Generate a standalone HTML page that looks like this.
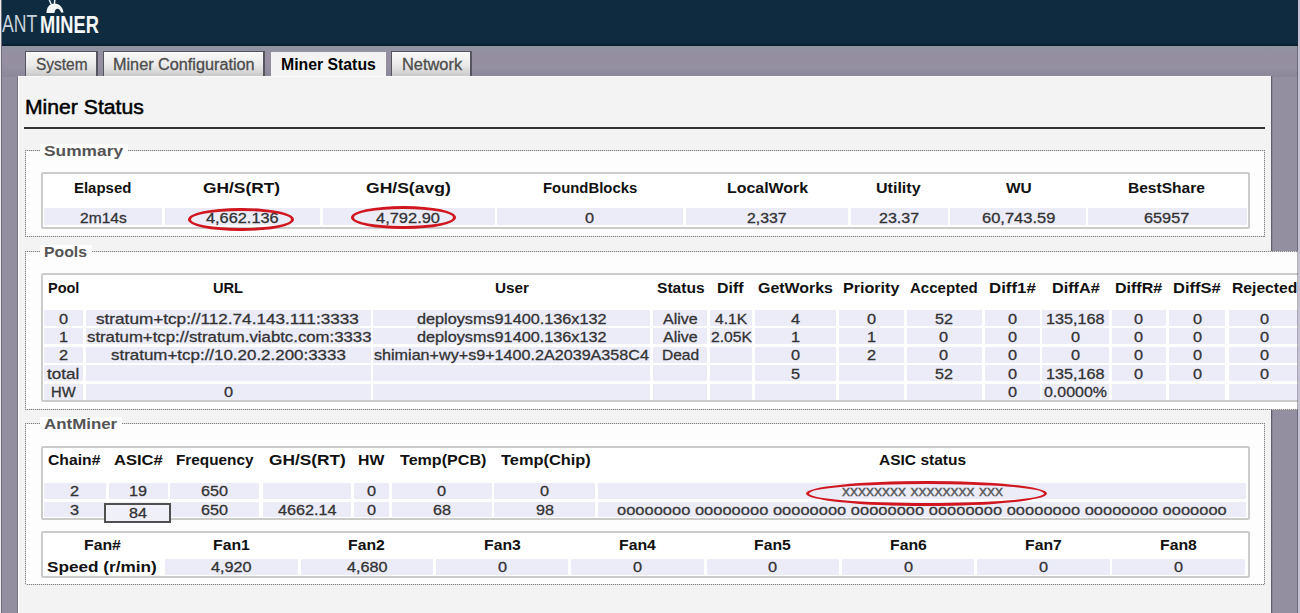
<!DOCTYPE html>
<html><head><meta charset="utf-8"><title>Miner Status</title>
<style>
html,body{margin:0;padding:0;}
body{width:1300px;height:613px;overflow:hidden;position:relative;font-family:"Liberation Sans",sans-serif;background:#938ea0;}
b{position:absolute;display:block;}
i{position:absolute;font-style:normal;white-space:pre;line-height:20px;transform-origin:0 0;}
</style></head><body>
<b style="left:0px;top:0px;width:1300px;height:613px;background:#938ea0"></b><b style="left:0px;top:46px;width:1300px;height:31px;background:linear-gradient(#9093a3,#968fa1 35%,#938ea0 70%,#8c8898)"></b><b style="left:0px;top:0px;width:1300px;height:44px;background:#0f2b3f"></b><b style="left:0px;top:44px;width:1300px;height:2px;background:#0b2030"></b><b style="left:25px;top:51px;width:73px;height:26px;background:linear-gradient(#fafafa,#e8e8e8 55%,#d2d2d2 85%,#c4c4c4);border:1px solid #55555f;border-width:1.5px 2px 0 1px;box-sizing:border-box"></b><b style="left:103px;top:51px;width:162px;height:26px;background:linear-gradient(#fafafa,#e8e8e8 55%,#d2d2d2 85%,#c4c4c4);border:1px solid #55555f;border-width:1.5px 2px 0 1px;box-sizing:border-box"></b><b style="left:271px;top:52px;width:115px;height:25px;background:#f3f3f3"></b><b style="left:391px;top:51px;width:81px;height:26px;background:linear-gradient(#fafafa,#e8e8e8 55%,#d2d2d2 85%,#c4c4c4);border:1px solid #55555f;border-width:1.5px 2px 0 1px;box-sizing:border-box"></b><b style="left:18px;top:76px;width:1253px;height:537px;background:#f3f3f3;border-left:1px solid #fff;border-top:1px solid #fafafa;box-sizing:border-box"></b><b style="left:1271px;top:76px;width:1px;height:537px;background:#625f6d"></b><b style="left:1272px;top:76px;width:1px;height:537px;background:#878395"></b><b style="left:24px;top:127px;width:1241px;height:2px;background:#333"></b><b style="left:25px;top:150px;width:1240px;height:86.5px;background:#fdfdfd"></b><b style="left:25px;top:150px;width:14.899999999999999px;height:1px;background:repeating-linear-gradient(90deg,#808080 0 1px,#dadada 1px 2px)"></b><b style="left:128px;top:150px;width:1137px;height:1px;background:repeating-linear-gradient(90deg,#808080 0 1px,#dadada 1px 2px)"></b><b style="left:25px;top:235.5px;width:1240px;height:1.0px;background:repeating-linear-gradient(90deg,#808080 0 1px,#dadada 1px 2px)"></b><b style="left:25px;top:150px;width:1px;height:86.5px;background:repeating-linear-gradient(180deg,#808080 0 1px,#dadada 1px 2px)"></b><b style="left:1264px;top:150px;width:1px;height:86.5px;background:repeating-linear-gradient(180deg,#808080 0 1px,#dadada 1px 2px)"></b><b style="left:39.9px;top:144px;width:88.1px;height:16px;background:#fdfdfd"></b><b style="left:40.5px;top:171.5px;width:1209.5px;height:57.5px;background:#fff;border:2px solid #cbcbcb;border-radius:2px;box-sizing:border-box"></b><b style="left:43.5px;top:208px;width:118.5px;height:16.5px;background:#ececf9"></b><b style="left:165px;top:208px;width:155px;height:16.5px;background:#ececf9"></b><b style="left:323px;top:208px;width:171.5px;height:16.5px;background:#ececf9"></b><b style="left:497px;top:208px;width:186px;height:16.5px;background:#ececf9"></b><b style="left:686px;top:208px;width:162px;height:16.5px;background:#ececf9"></b><b style="left:851px;top:208px;width:97px;height:16.5px;background:#ececf9"></b><b style="left:950px;top:208px;width:136px;height:16.5px;background:#ececf9"></b><b style="left:1088px;top:208px;width:159px;height:16.5px;background:#ececf9"></b><b style="left:25px;top:251px;width:1305px;height:159px;background:#fdfdfd"></b><b style="left:25px;top:251px;width:15px;height:1px;background:repeating-linear-gradient(90deg,#808080 0 1px,#dadada 1px 2px)"></b><b style="left:92px;top:251px;width:1238px;height:1px;background:repeating-linear-gradient(90deg,#808080 0 1px,#dadada 1px 2px)"></b><b style="left:25px;top:409px;width:1305px;height:1px;background:repeating-linear-gradient(90deg,#808080 0 1px,#dadada 1px 2px)"></b><b style="left:25px;top:251px;width:1px;height:159px;background:repeating-linear-gradient(180deg,#808080 0 1px,#dadada 1px 2px)"></b><b style="left:40px;top:245px;width:52px;height:16px;background:#fdfdfd"></b><b style="left:40.5px;top:272.5px;width:1299.5px;height:129.5px;background:#fff;border:2px solid #cbcbcb;border-radius:2px;box-sizing:border-box"></b><b style="left:43.5px;top:310px;width:39.5px;height:16px;background:#ececf9"></b><b style="left:86px;top:310px;width:284.6px;height:16px;background:#ececf9"></b><b style="left:373px;top:310px;width:277.29999999999995px;height:16px;background:#ececf9"></b><b style="left:653px;top:310px;width:54.299999999999955px;height:16px;background:#ececf9"></b><b style="left:710.3px;top:310px;width:41.90000000000009px;height:16px;background:#ececf9"></b><b style="left:754.7px;top:310px;width:81.29999999999995px;height:16px;background:#ececf9"></b><b style="left:839.2px;top:310px;width:64.79999999999995px;height:16px;background:#ececf9"></b><b style="left:906.5px;top:310px;width:75.0px;height:16px;background:#ececf9"></b><b style="left:984.6px;top:310px;width:55.39999999999998px;height:16px;background:#ececf9"></b><b style="left:1042px;top:310px;width:66.59999999999991px;height:16px;background:#ececf9"></b><b style="left:1111.7px;top:310px;width:54.299999999999955px;height:16px;background:#ececf9"></b><b style="left:1169.2px;top:310px;width:56.299999999999955px;height:16px;background:#ececf9"></b><b style="left:1228.6px;top:310px;width:71.90000000000009px;height:16px;background:#ececf9"></b><b style="left:43.5px;top:328px;width:39.5px;height:16px;background:#ececf9"></b><b style="left:86px;top:328px;width:284.6px;height:16px;background:#ececf9"></b><b style="left:373px;top:328px;width:277.29999999999995px;height:16px;background:#ececf9"></b><b style="left:653px;top:328px;width:54.299999999999955px;height:16px;background:#ececf9"></b><b style="left:710.3px;top:328px;width:41.90000000000009px;height:16px;background:#ececf9"></b><b style="left:754.7px;top:328px;width:81.29999999999995px;height:16px;background:#ececf9"></b><b style="left:839.2px;top:328px;width:64.79999999999995px;height:16px;background:#ececf9"></b><b style="left:906.5px;top:328px;width:75.0px;height:16px;background:#ececf9"></b><b style="left:984.6px;top:328px;width:55.39999999999998px;height:16px;background:#ececf9"></b><b style="left:1042px;top:328px;width:66.59999999999991px;height:16px;background:#ececf9"></b><b style="left:1111.7px;top:328px;width:54.299999999999955px;height:16px;background:#ececf9"></b><b style="left:1169.2px;top:328px;width:56.299999999999955px;height:16px;background:#ececf9"></b><b style="left:1228.6px;top:328px;width:71.90000000000009px;height:16px;background:#ececf9"></b><b style="left:43.5px;top:346.5px;width:39.5px;height:16.0px;background:#ececf9"></b><b style="left:86px;top:346.5px;width:284.6px;height:16.0px;background:#ececf9"></b><b style="left:373px;top:346.5px;width:277.29999999999995px;height:16.0px;background:#ececf9"></b><b style="left:653px;top:346.5px;width:54.299999999999955px;height:16.0px;background:#ececf9"></b><b style="left:710.3px;top:346.5px;width:41.90000000000009px;height:16.0px;background:#ececf9"></b><b style="left:754.7px;top:346.5px;width:81.29999999999995px;height:16.0px;background:#ececf9"></b><b style="left:839.2px;top:346.5px;width:64.79999999999995px;height:16.0px;background:#ececf9"></b><b style="left:906.5px;top:346.5px;width:75.0px;height:16.0px;background:#ececf9"></b><b style="left:984.6px;top:346.5px;width:55.39999999999998px;height:16.0px;background:#ececf9"></b><b style="left:1042px;top:346.5px;width:66.59999999999991px;height:16.0px;background:#ececf9"></b><b style="left:1111.7px;top:346.5px;width:54.299999999999955px;height:16.0px;background:#ececf9"></b><b style="left:1169.2px;top:346.5px;width:56.299999999999955px;height:16.0px;background:#ececf9"></b><b style="left:1228.6px;top:346.5px;width:71.90000000000009px;height:16.0px;background:#ececf9"></b><b style="left:43.5px;top:365px;width:39.5px;height:16px;background:#ececf9"></b><b style="left:86px;top:365px;width:284.6px;height:16px;background:#ececf9"></b><b style="left:373px;top:365px;width:277.29999999999995px;height:16px;background:#ececf9"></b><b style="left:653px;top:365px;width:54.299999999999955px;height:16px;background:#ececf9"></b><b style="left:710.3px;top:365px;width:41.90000000000009px;height:16px;background:#ececf9"></b><b style="left:754.7px;top:365px;width:81.29999999999995px;height:16px;background:#ececf9"></b><b style="left:839.2px;top:365px;width:64.79999999999995px;height:16px;background:#ececf9"></b><b style="left:906.5px;top:365px;width:75.0px;height:16px;background:#ececf9"></b><b style="left:984.6px;top:365px;width:55.39999999999998px;height:16px;background:#ececf9"></b><b style="left:1042px;top:365px;width:66.59999999999991px;height:16px;background:#ececf9"></b><b style="left:1111.7px;top:365px;width:54.299999999999955px;height:16px;background:#ececf9"></b><b style="left:1169.2px;top:365px;width:56.299999999999955px;height:16px;background:#ececf9"></b><b style="left:1228.6px;top:365px;width:71.90000000000009px;height:16px;background:#ececf9"></b><b style="left:43.5px;top:383.5px;width:39.5px;height:16.0px;background:#ececf9"></b><b style="left:86px;top:383.5px;width:284.6px;height:16.0px;background:#ececf9"></b><b style="left:373px;top:383.5px;width:277.29999999999995px;height:16.0px;background:#ececf9"></b><b style="left:653px;top:383.5px;width:54.299999999999955px;height:16.0px;background:#ececf9"></b><b style="left:710.3px;top:383.5px;width:41.90000000000009px;height:16.0px;background:#ececf9"></b><b style="left:754.7px;top:383.5px;width:81.29999999999995px;height:16.0px;background:#ececf9"></b><b style="left:839.2px;top:383.5px;width:64.79999999999995px;height:16.0px;background:#ececf9"></b><b style="left:906.5px;top:383.5px;width:75.0px;height:16.0px;background:#ececf9"></b><b style="left:984.6px;top:383.5px;width:55.39999999999998px;height:16.0px;background:#ececf9"></b><b style="left:1042px;top:383.5px;width:66.59999999999991px;height:16.0px;background:#ececf9"></b><b style="left:1111.7px;top:383.5px;width:54.299999999999955px;height:16.0px;background:#ececf9"></b><b style="left:1169.2px;top:383.5px;width:56.299999999999955px;height:16.0px;background:#ececf9"></b><b style="left:1228.6px;top:383.5px;width:71.90000000000009px;height:16.0px;background:#ececf9"></b><b style="left:25px;top:423px;width:1240px;height:162px;background:#fdfdfd"></b><b style="left:25px;top:423px;width:15px;height:1px;background:repeating-linear-gradient(90deg,#808080 0 1px,#dadada 1px 2px)"></b><b style="left:122.2px;top:423px;width:1142.8px;height:1px;background:repeating-linear-gradient(90deg,#808080 0 1px,#dadada 1px 2px)"></b><b style="left:25px;top:584px;width:1240px;height:1px;background:repeating-linear-gradient(90deg,#808080 0 1px,#dadada 1px 2px)"></b><b style="left:25px;top:423px;width:1px;height:162px;background:repeating-linear-gradient(180deg,#808080 0 1px,#dadada 1px 2px)"></b><b style="left:1264px;top:423px;width:1px;height:162px;background:repeating-linear-gradient(180deg,#808080 0 1px,#dadada 1px 2px)"></b><b style="left:40px;top:417px;width:82.2px;height:16px;background:#fdfdfd"></b><b style="left:40.5px;top:446px;width:1209.5px;height:74px;background:#fff;border:2px solid #cbcbcb;border-radius:2px;box-sizing:border-box"></b><b style="left:43.5px;top:483px;width:62.2px;height:15.5px;background:#ececf9"></b><b style="left:109px;top:483px;width:58.69999999999999px;height:15.5px;background:#ececf9"></b><b style="left:170.2px;top:483px;width:88.60000000000002px;height:15.5px;background:#ececf9"></b><b style="left:262.8px;top:483px;width:88.19999999999999px;height:15.5px;background:#ececf9"></b><b style="left:354px;top:483px;width:35px;height:15.5px;background:#ececf9"></b><b style="left:392px;top:483px;width:99.60000000000002px;height:15.5px;background:#ececf9"></b><b style="left:494.4px;top:483px;width:100.89999999999998px;height:15.5px;background:#ececf9"></b><b style="left:598px;top:483px;width:648px;height:15.5px;background:#ececf9"></b><b style="left:43.5px;top:501.5px;width:62.2px;height:15.5px;background:#ececf9"></b><b style="left:109px;top:501.5px;width:58.69999999999999px;height:15.5px;background:#ececf9"></b><b style="left:170.2px;top:501.5px;width:88.60000000000002px;height:15.5px;background:#ececf9"></b><b style="left:262.8px;top:501.5px;width:88.19999999999999px;height:15.5px;background:#ececf9"></b><b style="left:354px;top:501.5px;width:35px;height:15.5px;background:#ececf9"></b><b style="left:392px;top:501.5px;width:99.60000000000002px;height:15.5px;background:#ececf9"></b><b style="left:494.4px;top:501.5px;width:100.89999999999998px;height:15.5px;background:#ececf9"></b><b style="left:598px;top:501.5px;width:648px;height:15.5px;background:#ececf9"></b><b style="left:104px;top:503px;width:67px;height:20px;border:2px solid #505050;box-sizing:border-box;background:#f0f0f9"></b><b style="left:40.5px;top:530.5px;width:1209.5px;height:47.5px;background:#fff;border:2px solid #cbcbcb;border-radius:2px;box-sizing:border-box"></b><b style="left:165.3px;top:558.5px;width:132.5px;height:16.0px;background:#ececf9"></b><b style="left:300.6px;top:558.5px;width:132.5px;height:16.0px;background:#ececf9"></b><b style="left:435.90000000000003px;top:558.5px;width:132.50000000000006px;height:16.0px;background:#ececf9"></b><b style="left:571.2px;top:558.5px;width:132.5px;height:16.0px;background:#ececf9"></b><b style="left:706.5px;top:558.5px;width:132.5px;height:16.0px;background:#ececf9"></b><b style="left:841.8px;top:558.5px;width:132.5px;height:16.0px;background:#ececf9"></b><b style="left:977.1000000000001px;top:558.5px;width:132.5px;height:16.0px;background:#ececf9"></b><b style="left:1112.4px;top:558.5px;width:132.5px;height:16.0px;background:#ececf9"></b><b style="left:0px;top:0px;width:1px;height:613px;background:#ececf0"></b><b style="left:1px;top:0px;width:1px;height:613px;background:#6f6d79"></b><b style="left:17px;top:77px;width:1px;height:536px;background:#77748a"></b><b style="left:1297px;top:0px;width:1px;height:613px;background:rgba(40,40,60,0.35)"></b><b style="left:1298px;top:0px;width:2px;height:613px;background:#c4c2d2"></b>
<svg style="position:absolute;left:38px;top:0" width="30" height="16" viewBox="0 0 30 16">
<path d="M8.5 13 C8.5 7.5 11.5 3.5 16.5 3.5 C21.5 3.5 25 7.5 25.5 12.5 L23 12.5 C22.5 10.2 21 8.8 19.5 8.8 C18 8.8 16.8 10 16.5 13 Z" fill="#f4f6f8"/>
<path d="M11.3 0 L13.3 4.5 M16.8 0 L16.4 4" stroke="#e8ecf0" stroke-width="1.5" fill="none"/>
</svg>
<i style="left:35.90px;top:55.00px;font-size:16px;font-weight:400;color:#4c4c4c;transform:scaleX(0.9662);-webkit-text-stroke:0.3px #4c4c4c;">System</i><i style="left:113.20px;top:55.00px;font-size:16px;font-weight:400;color:#4c4c4c;transform:scaleX(1.0143);-webkit-text-stroke:0.3px #4c4c4c;">Miner Configuration</i><i style="left:280.60px;top:55.00px;font-size:16px;font-weight:700;color:#000;transform:scaleX(0.9875);">Miner Status</i><i style="left:401.50px;top:55.00px;font-size:16px;font-weight:400;color:#4c4c4c;transform:scaleX(1.0238);-webkit-text-stroke:0.3px #4c4c4c;">Network</i><i style="left:24.80px;top:97.00px;font-size:20px;font-weight:400;color:#000;transform:scaleX(1.0579);-webkit-text-stroke:0.5px #000;">Miner Status</i><i style="left:43.90px;top:141.00px;font-size:15px;font-weight:700;color:#545454;transform:scaleX(1.1564);">Summary</i><i style="left:73.80px;top:177.60px;font-size:15px;font-weight:700;color:#111;transform:scaleX(0.9965);">Elapsed</i><i style="left:79.80px;top:207.60px;font-size:15px;font-weight:400;color:#333;transform:scaleX(1.0378);-webkit-text-stroke:0.3px #333;">2m14s</i><i style="left:203.40px;top:177.60px;font-size:15px;font-weight:700;color:#111;transform:scaleX(1.1574);">GH/S(RT)</i><i style="left:205.90px;top:207.60px;font-size:15px;font-weight:400;color:#333;transform:scaleX(1.0885);-webkit-text-stroke:0.3px #333;">4,662.136</i><i style="left:366.00px;top:177.60px;font-size:15px;font-weight:700;color:#111;transform:scaleX(1.1683);">GH/S(avg)</i><i style="left:375.80px;top:207.60px;font-size:15px;font-weight:400;color:#333;transform:scaleX(1.0959);-webkit-text-stroke:0.3px #333;">4,792.90</i><i style="left:543.20px;top:177.60px;font-size:15px;font-weight:700;color:#111;transform:scaleX(0.9916);">FoundBlocks</i><i style="left:585.48px;top:207.60px;font-size:15px;font-weight:400;color:#333;transform:scaleX(1.0880);-webkit-text-stroke:0.3px #333;">0</i><i style="left:726.80px;top:177.60px;font-size:15px;font-weight:700;color:#111;transform:scaleX(1.0614);">LocalWork</i><i style="left:747.00px;top:207.60px;font-size:15px;font-weight:400;color:#333;transform:scaleX(1.0507);-webkit-text-stroke:0.3px #333;">2,337</i><i style="left:876.40px;top:177.60px;font-size:15px;font-weight:700;color:#111;transform:scaleX(1.0695);">Utility</i><i style="left:879.00px;top:207.60px;font-size:15px;font-weight:400;color:#333;transform:scaleX(1.0667);-webkit-text-stroke:0.3px #333;">23.37</i><i style="left:1006.00px;top:177.60px;font-size:15px;font-weight:700;color:#111;transform:scaleX(1.0280);">WU</i><i style="left:981.50px;top:207.60px;font-size:15px;font-weight:400;color:#333;transform:scaleX(1.0990);-webkit-text-stroke:0.3px #333;">60,743.59</i><i style="left:1128.30px;top:177.60px;font-size:15px;font-weight:700;color:#111;transform:scaleX(1.0364);">BestShare</i><i style="left:1144.00px;top:207.60px;font-size:15px;font-weight:400;color:#333;transform:scaleX(1.0839);-webkit-text-stroke:0.3px #333;">65957</i><i style="left:44.00px;top:242.00px;font-size:15px;font-weight:700;color:#545454;transform:scaleX(1.0539);">Pools</i><i style="left:47.60px;top:277.60px;font-size:15px;font-weight:700;color:#111;transform:scaleX(0.9662);">Pool</i><i style="left:213.00px;top:277.60px;font-size:15px;font-weight:700;color:#111;transform:scaleX(0.9740);">URL</i><i style="left:495.00px;top:277.60px;font-size:15px;font-weight:700;color:#111;transform:scaleX(1.0180);">User</i><i style="left:656.50px;top:277.60px;font-size:15px;font-weight:700;color:#111;transform:scaleX(1.0371);">Status</i><i style="left:717.40px;top:277.60px;font-size:15px;font-weight:700;color:#111;transform:scaleX(1.0598);">Diff</i><i style="left:758.00px;top:277.60px;font-size:15px;font-weight:700;color:#111;transform:scaleX(1.0623);">GetWorks</i><i style="left:843.00px;top:277.60px;font-size:15px;font-weight:700;color:#111;transform:scaleX(1.0743);">Priority</i><i style="left:909.80px;top:277.60px;font-size:15px;font-weight:700;color:#111;transform:scaleX(1.0030);">Accepted</i><i style="left:988.60px;top:277.60px;font-size:15px;font-weight:700;color:#111;transform:scaleX(1.1223);">Diff1#</i><i style="left:1051.70px;top:277.60px;font-size:15px;font-weight:700;color:#111;transform:scaleX(1.0792);">DiffA#</i><i style="left:1114.80px;top:277.60px;font-size:15px;font-weight:700;color:#111;transform:scaleX(1.0679);">DiffR#</i><i style="left:1173.00px;top:277.60px;font-size:15px;font-weight:700;color:#111;transform:scaleX(1.0993);">DiffS#</i><i style="left:1231.70px;top:277.60px;font-size:15px;font-weight:700;color:#111;transform:scaleX(1.0448);">Rejected</i><i style="left:58.73px;top:308.80px;font-size:15px;font-weight:400;color:#333;transform:scaleX(1.0880);-webkit-text-stroke:0.3px #333;">0</i><i style="left:96.20px;top:308.80px;font-size:15px;font-weight:400;color:#333;transform:scaleX(1.1441);-webkit-text-stroke:0.3px #333;">stratum+tcp://112.74.143.111:3333</i><i style="left:416.50px;top:308.80px;font-size:15px;font-weight:400;color:#333;transform:scaleX(1.0822);-webkit-text-stroke:0.3px #333;">deploysms91400.136x132</i><i style="left:662.85px;top:308.80px;font-size:15px;font-weight:400;color:#333;transform:scaleX(1.0646);-webkit-text-stroke:0.3px #333;">Alive</i><i style="left:715.20px;top:308.80px;font-size:15px;font-weight:400;color:#333;transform:scaleX(1.0387);-webkit-text-stroke:0.3px #333;">4.1K</i><i style="left:790.83px;top:308.80px;font-size:15px;font-weight:400;color:#333;transform:scaleX(1.0880);-webkit-text-stroke:0.3px #333;">4</i><i style="left:867.08px;top:308.80px;font-size:15px;font-weight:400;color:#333;transform:scaleX(1.0880);-webkit-text-stroke:0.3px #333;">0</i><i style="left:935.02px;top:308.80px;font-size:15px;font-weight:400;color:#333;transform:scaleX(1.0750);-webkit-text-stroke:0.3px #333;">52</i><i style="left:1007.78px;top:308.80px;font-size:15px;font-weight:400;color:#333;transform:scaleX(1.0880);-webkit-text-stroke:0.3px #333;">0</i><i style="left:1046.03px;top:308.80px;font-size:15px;font-weight:400;color:#333;transform:scaleX(1.0800);-webkit-text-stroke:0.3px #333;">135,168</i><i style="left:1134.33px;top:308.80px;font-size:15px;font-weight:400;color:#333;transform:scaleX(1.0880);-webkit-text-stroke:0.3px #333;">0</i><i style="left:1192.83px;top:308.80px;font-size:15px;font-weight:400;color:#333;transform:scaleX(1.0880);-webkit-text-stroke:0.3px #333;">0</i><i style="left:1260.03px;top:308.80px;font-size:15px;font-weight:400;color:#333;transform:scaleX(1.0880);-webkit-text-stroke:0.3px #333;">0</i><i style="left:58.73px;top:326.80px;font-size:15px;font-weight:400;color:#333;transform:scaleX(1.0880);-webkit-text-stroke:0.3px #333;">1</i><i style="left:86.50px;top:326.80px;font-size:15px;font-weight:400;color:#333;transform:scaleX(1.1170);-webkit-text-stroke:0.3px #333;">stratum+tcp://stratum.viabtc.com:3333</i><i style="left:416.50px;top:326.80px;font-size:15px;font-weight:400;color:#333;transform:scaleX(1.0822);-webkit-text-stroke:0.3px #333;">deploysms91400.136x132</i><i style="left:662.85px;top:326.80px;font-size:15px;font-weight:400;color:#333;transform:scaleX(1.0646);-webkit-text-stroke:0.3px #333;">Alive</i><i style="left:710.74px;top:326.80px;font-size:15px;font-weight:400;color:#333;transform:scaleX(1.0464);-webkit-text-stroke:0.3px #333;">2.05K</i><i style="left:790.83px;top:326.80px;font-size:15px;font-weight:400;color:#333;transform:scaleX(1.0880);-webkit-text-stroke:0.3px #333;">1</i><i style="left:867.08px;top:326.80px;font-size:15px;font-weight:400;color:#333;transform:scaleX(1.0880);-webkit-text-stroke:0.3px #333;">1</i><i style="left:939.48px;top:326.80px;font-size:15px;font-weight:400;color:#333;transform:scaleX(1.0880);-webkit-text-stroke:0.3px #333;">0</i><i style="left:1007.78px;top:326.80px;font-size:15px;font-weight:400;color:#333;transform:scaleX(1.0880);-webkit-text-stroke:0.3px #333;">0</i><i style="left:1070.78px;top:326.80px;font-size:15px;font-weight:400;color:#333;transform:scaleX(1.0880);-webkit-text-stroke:0.3px #333;">0</i><i style="left:1134.33px;top:326.80px;font-size:15px;font-weight:400;color:#333;transform:scaleX(1.0880);-webkit-text-stroke:0.3px #333;">0</i><i style="left:1192.83px;top:326.80px;font-size:15px;font-weight:400;color:#333;transform:scaleX(1.0880);-webkit-text-stroke:0.3px #333;">0</i><i style="left:1260.03px;top:326.80px;font-size:15px;font-weight:400;color:#333;transform:scaleX(1.0880);-webkit-text-stroke:0.3px #333;">0</i><i style="left:58.73px;top:345.30px;font-size:15px;font-weight:400;color:#333;transform:scaleX(1.0880);-webkit-text-stroke:0.3px #333;">2</i><i style="left:110.60px;top:345.30px;font-size:15px;font-weight:400;color:#333;transform:scaleX(1.1288);-webkit-text-stroke:0.3px #333;">stratum+tcp://10.20.2.200:3333</i><i style="left:374.40px;top:345.30px;font-size:15px;font-weight:400;color:#333;transform:scaleX(1.0755);-webkit-text-stroke:0.3px #333;">shimian+wy+s9+1400.2A2039A358C4</i><i style="left:661.55px;top:345.30px;font-size:15px;font-weight:400;color:#333;transform:scaleX(1.0365);-webkit-text-stroke:0.3px #333;">Dead</i><i style="left:790.83px;top:345.30px;font-size:15px;font-weight:400;color:#333;transform:scaleX(1.0880);-webkit-text-stroke:0.3px #333;">0</i><i style="left:867.08px;top:345.30px;font-size:15px;font-weight:400;color:#333;transform:scaleX(1.0880);-webkit-text-stroke:0.3px #333;">2</i><i style="left:939.48px;top:345.30px;font-size:15px;font-weight:400;color:#333;transform:scaleX(1.0880);-webkit-text-stroke:0.3px #333;">0</i><i style="left:1007.78px;top:345.30px;font-size:15px;font-weight:400;color:#333;transform:scaleX(1.0880);-webkit-text-stroke:0.3px #333;">0</i><i style="left:1070.78px;top:345.30px;font-size:15px;font-weight:400;color:#333;transform:scaleX(1.0880);-webkit-text-stroke:0.3px #333;">0</i><i style="left:1134.33px;top:345.30px;font-size:15px;font-weight:400;color:#333;transform:scaleX(1.0880);-webkit-text-stroke:0.3px #333;">0</i><i style="left:1192.83px;top:345.30px;font-size:15px;font-weight:400;color:#333;transform:scaleX(1.0880);-webkit-text-stroke:0.3px #333;">0</i><i style="left:1260.03px;top:345.30px;font-size:15px;font-weight:400;color:#333;transform:scaleX(1.0880);-webkit-text-stroke:0.3px #333;">0</i><i style="left:47.09px;top:363.80px;font-size:15px;font-weight:400;color:#333;transform:scaleX(1.1378);-webkit-text-stroke:0.3px #333;">total</i><i style="left:790.83px;top:363.80px;font-size:15px;font-weight:400;color:#333;transform:scaleX(1.0880);-webkit-text-stroke:0.3px #333;">5</i><i style="left:935.02px;top:363.80px;font-size:15px;font-weight:400;color:#333;transform:scaleX(1.0750);-webkit-text-stroke:0.3px #333;">52</i><i style="left:1007.78px;top:363.80px;font-size:15px;font-weight:400;color:#333;transform:scaleX(1.0880);-webkit-text-stroke:0.3px #333;">0</i><i style="left:1046.03px;top:363.80px;font-size:15px;font-weight:400;color:#333;transform:scaleX(1.0800);-webkit-text-stroke:0.3px #333;">135,168</i><i style="left:1134.33px;top:363.80px;font-size:15px;font-weight:400;color:#333;transform:scaleX(1.0880);-webkit-text-stroke:0.3px #333;">0</i><i style="left:1192.83px;top:363.80px;font-size:15px;font-weight:400;color:#333;transform:scaleX(1.0880);-webkit-text-stroke:0.3px #333;">0</i><i style="left:1260.03px;top:363.80px;font-size:15px;font-weight:400;color:#333;transform:scaleX(1.0880);-webkit-text-stroke:0.3px #333;">0</i><i style="left:50.96px;top:382.30px;font-size:15px;font-weight:400;color:#333;transform:scaleX(0.9836);-webkit-text-stroke:0.3px #333;">HW</i><i style="left:223.78px;top:382.30px;font-size:15px;font-weight:400;color:#333;transform:scaleX(1.0880);-webkit-text-stroke:0.3px #333;">0</i><i style="left:1007.78px;top:382.30px;font-size:15px;font-weight:400;color:#333;transform:scaleX(1.0880);-webkit-text-stroke:0.3px #333;">0</i><i style="left:1043.86px;top:382.30px;font-size:15px;font-weight:400;color:#333;transform:scaleX(1.0623);-webkit-text-stroke:0.3px #333;">0.0000%</i><i style="left:44.00px;top:414.00px;font-size:15px;font-weight:700;color:#545454;transform:scaleX(1.1262);">AntMiner</i><i style="left:48.30px;top:450.00px;font-size:15px;font-weight:700;color:#111;transform:scaleX(1.0480);">Chain#</i><i style="left:113.50px;top:450.00px;font-size:15px;font-weight:700;color:#111;transform:scaleX(1.1041);">ASIC#</i><i style="left:176.30px;top:450.00px;font-size:15px;font-weight:700;color:#111;transform:scaleX(1.0211);">Frequency</i><i style="left:268.50px;top:450.00px;font-size:15px;font-weight:700;color:#111;transform:scaleX(1.1529);">GH/S(RT)</i><i style="left:357.70px;top:450.00px;font-size:15px;font-weight:700;color:#111;transform:scaleX(1.0520);">HW</i><i style="left:399.60px;top:450.00px;font-size:15px;font-weight:700;color:#111;transform:scaleX(1.0720);">Temp(PCB)</i><i style="left:500.70px;top:450.00px;font-size:15px;font-weight:700;color:#111;transform:scaleX(1.0925);">Temp(Chip)</i><i style="left:879.20px;top:450.00px;font-size:15px;font-weight:700;color:#111;transform:scaleX(1.0344);">ASIC status</i><i style="left:70.08px;top:481.30px;font-size:15px;font-weight:400;color:#333;transform:scaleX(1.0880);-webkit-text-stroke:0.3px #333;">2</i><i style="left:129.37px;top:481.30px;font-size:15px;font-weight:400;color:#333;transform:scaleX(1.0750);-webkit-text-stroke:0.3px #333;">19</i><i style="left:201.01px;top:481.30px;font-size:15px;font-weight:400;color:#333;transform:scaleX(1.0793);-webkit-text-stroke:0.3px #333;">650</i><i style="left:366.98px;top:481.30px;font-size:15px;font-weight:400;color:#333;transform:scaleX(1.0880);-webkit-text-stroke:0.3px #333;">0</i><i style="left:437.28px;top:481.30px;font-size:15px;font-weight:400;color:#333;transform:scaleX(1.0880);-webkit-text-stroke:0.3px #333;">0</i><i style="left:540.33px;top:481.30px;font-size:15px;font-weight:400;color:#333;transform:scaleX(1.0880);-webkit-text-stroke:0.3px #333;">0</i><i style="left:70.08px;top:499.80px;font-size:15px;font-weight:400;color:#333;transform:scaleX(1.0880);-webkit-text-stroke:0.3px #333;">3</i><i style="left:201.01px;top:499.80px;font-size:15px;font-weight:400;color:#333;transform:scaleX(1.0793);-webkit-text-stroke:0.3px #333;">650</i><i style="left:277.63px;top:499.80px;font-size:15px;font-weight:400;color:#333;transform:scaleX(1.0800);-webkit-text-stroke:0.3px #333;">4662.14</i><i style="left:366.98px;top:499.80px;font-size:15px;font-weight:400;color:#333;transform:scaleX(1.0880);-webkit-text-stroke:0.3px #333;">0</i><i style="left:432.82px;top:499.80px;font-size:15px;font-weight:400;color:#333;transform:scaleX(1.0750);-webkit-text-stroke:0.3px #333;">68</i><i style="left:535.87px;top:499.80px;font-size:15px;font-weight:400;color:#333;transform:scaleX(1.0750);-webkit-text-stroke:0.3px #333;">98</i><i style="left:842.00px;top:481.30px;font-size:15px;font-weight:400;color:#5a5a5a;transform:scaleX(1.0676);-webkit-text-stroke:0.3px #5a5a5a;">xxxxxxxx xxxxxxxx xxx</i><i style="left:617.00px;top:499.50px;font-size:15px;font-weight:400;color:#3a3a3a;transform:scaleX(1.0992);-webkit-text-stroke:0.3px #3a3a3a;">oooooooo oooooooo oooooooo oooooooo oooooooo oooooooo oooooooo ooooooo</i><i style="left:128.52px;top:502.50px;font-size:15px;font-weight:400;color:#333;transform:scaleX(1.0750);-webkit-text-stroke:0.3px #333;">84</i><i style="left:83.50px;top:535.00px;font-size:15px;font-weight:700;color:#111;transform:scaleX(1.0543);">Fan#</i><i style="left:213.16px;top:535.00px;font-size:15px;font-weight:700;color:#111;transform:scaleX(1.0510);">Fan1</i><i style="left:348.46px;top:535.00px;font-size:15px;font-weight:700;color:#111;transform:scaleX(1.0510);">Fan2</i><i style="left:483.76px;top:535.00px;font-size:15px;font-weight:700;color:#111;transform:scaleX(1.0510);">Fan3</i><i style="left:619.06px;top:535.00px;font-size:15px;font-weight:700;color:#111;transform:scaleX(1.0510);">Fan4</i><i style="left:754.36px;top:535.00px;font-size:15px;font-weight:700;color:#111;transform:scaleX(1.0510);">Fan5</i><i style="left:889.66px;top:535.00px;font-size:15px;font-weight:700;color:#111;transform:scaleX(1.0510);">Fan6</i><i style="left:1024.96px;top:535.00px;font-size:15px;font-weight:700;color:#111;transform:scaleX(1.0510);">Fan7</i><i style="left:1160.26px;top:535.00px;font-size:15px;font-weight:700;color:#111;transform:scaleX(1.0510);">Fan8</i><i style="left:47.00px;top:557.00px;font-size:15px;font-weight:700;color:#111;transform:scaleX(1.1451);">Speed (r/min)</i><i style="left:211.31px;top:557.00px;font-size:15px;font-weight:400;color:#333;transform:scaleX(1.0793);-webkit-text-stroke:0.3px #333;">4,920</i><i style="left:346.61px;top:557.00px;font-size:15px;font-weight:400;color:#333;transform:scaleX(1.0793);-webkit-text-stroke:0.3px #333;">4,680</i><i style="left:497.63px;top:557.00px;font-size:15px;font-weight:400;color:#333;transform:scaleX(1.0880);-webkit-text-stroke:0.3px #333;">0</i><i style="left:632.93px;top:557.00px;font-size:15px;font-weight:400;color:#333;transform:scaleX(1.0880);-webkit-text-stroke:0.3px #333;">0</i><i style="left:768.23px;top:557.00px;font-size:15px;font-weight:400;color:#333;transform:scaleX(1.0880);-webkit-text-stroke:0.3px #333;">0</i><i style="left:903.53px;top:557.00px;font-size:15px;font-weight:400;color:#333;transform:scaleX(1.0880);-webkit-text-stroke:0.3px #333;">0</i><i style="left:1038.83px;top:557.00px;font-size:15px;font-weight:400;color:#333;transform:scaleX(1.0880);-webkit-text-stroke:0.3px #333;">0</i><i style="left:1174.13px;top:557.00px;font-size:15px;font-weight:400;color:#333;transform:scaleX(1.0880);-webkit-text-stroke:0.3px #333;">0</i><i style="left:2.00px;top:14.20px;font-size:24px;font-weight:400;color:#c9d3dd;transform:scaleX(0.7333);">ANT</i><i style="left:39.80px;top:14.60px;font-size:24px;font-weight:700;color:#f4f6f8;transform:scaleX(0.7607);">MINER</i>
<b style="left:188px;top:207.5px;width:105.5px;height:23.5px;border:3px solid #d0161f;border-radius:50%;box-sizing:border-box"></b><b style="left:351px;top:205.8px;width:105.30000000000001px;height:23.5px;border:3px solid #d0161f;border-radius:50%;box-sizing:border-box"></b><b style="left:805.5px;top:481.3px;width:241.5px;height:25.0px;border:3px solid #d0161f;border-radius:50%;box-sizing:border-box"></b>
</body></html>
